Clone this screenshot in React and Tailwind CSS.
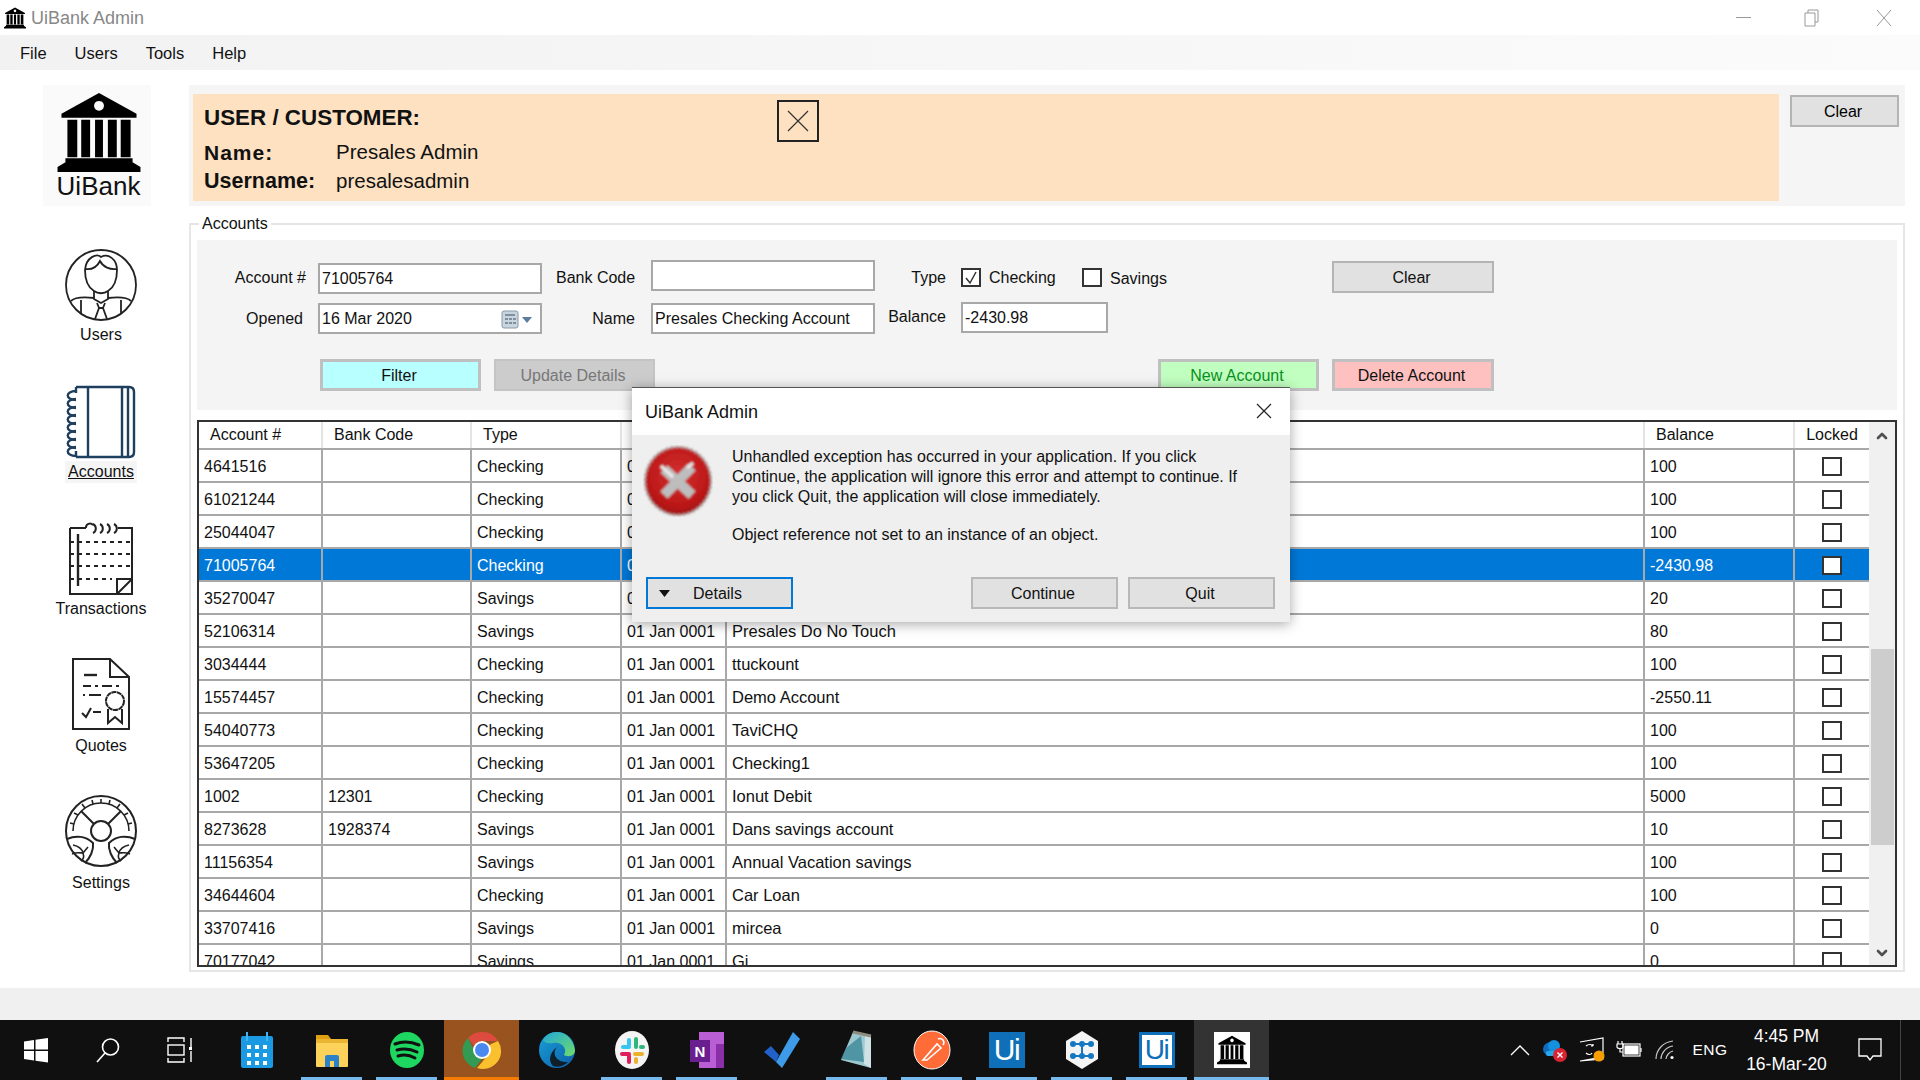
import { ChevronUp, ChevronDown } from "lucide-react";

const rows = [
  ["4641516", "", "Checking", "", "100"],
  ["61021244", "", "Checking", "", "100"],
  ["25044047", "", "Checking", "", "100"],
  ["71005764", "", "Checking", "", "-2430.98", true],
  ["35270047", "", "Savings", "", "20"],
  ["52106314", "", "Savings", "Presales Do No Touch", "80"],
  ["3034444", "", "Checking", "ttuckount", "100"],
  ["15574457", "", "Checking", "Demo Account", "-2550.11"],
  ["54040773", "", "Checking", "TaviCHQ", "100"],
  ["53647205", "", "Checking", "Checking1", "100"],
  ["1002", "12301", "Checking", "Ionut Debit", "5000"],
  ["8273628", "1928374", "Savings", "Dans savings account", "10"],
  ["11156354", "", "Savings", "Annual Vacation savings", "100"],
  ["34644604", "", "Checking", "Car Loan", "100"],
  ["33707416", "", "Savings", "mircea", "0"],
  ["70177042", "", "Savings", "Gi", "0"],
];

function BankGlyph({ className }) {
  return (
    <svg viewBox="0 0 84 80" className={className}>
      <path fillRule="evenodd" d="M42 0 L80 21 V25 H4 V21 Z M42 8 a5 5 0 1 0 .01 0 Z" />
      <path d="M10 27h10v38H10zM24 27h9v38h-9zM38 27h8v38h-8zM51 27h9v38h-9zM64 27h10v38H64z" />
      <path d="M8 66 H76 V70 L84 75 V80 H0 V75 L8 70 Z" />
    </svg>
  );
}

function UsersIcon() {
  return (
    <svg width="74" height="74" viewBox="0 0 74 74" fill="none" stroke="#222" strokeWidth="1.8">
      <circle cx="37" cy="37" r="35" />
      <path d="M21 22 C22 9 33 5 37 9 C44 5 53 11 53 22 C53 33 49 40 44 43 C40 46 34 46 30 43 C25 40 21 33 21 22 Z" />
      <path d="M21 21 C28 22 33 19 36 13 C39 19 46 22 53 21" />
      <path d="M30 43 V51 L37 55 L44 51 V43" />
      <path d="M7 53 C11 49 21 49 30 50 M67 53 C63 49 53 49 44 50" />
      <path d="M33 55 L35 60 L31 71 M41 55 L39 60 L43 71 M35 60 H39 M17 52 V66 M57 52 V66" />
    </svg>
  );
}

function AccountsIcon() {
  return (
    <svg width="72" height="74" viewBox="0 0 72 74" fill="none" stroke="#1f3f5f" strokeWidth="2.4">
      <path d="M11 2 H64 Q69 2 69 7 V67 Q69 72 64 72 H11" />
      <path d="M11 2 V8 M11 66 V72 M23 2 V72 M57 2 V72 M63 2 V72" />
      {[6, 14, 22, 30, 38, 46, 54, 62].map((y) => (
        <path key={y} d="M11 0 C0 0 0 9 11 9" transform={`translate(0 ${y})`} />
      ))}
    </svg>
  );
}

function TransactionsIcon() {
  return (
    <svg width="66" height="74" viewBox="0 0 66 74" fill="none" stroke="#222" strokeWidth="2">
      <path d="M2 6 H18 M50 6 H64 V72 H2 V6" />
      <path d="M18 6 a4 4 0 0 1 7 -3 M25 2 a5 5 0 0 1 0 9 M32 2 a5 5 0 0 1 0 9 M39 2 a5 5 0 0 1 0 9 M46 2 a5 5 0 0 1 0 9" />
      <path d="M10 12 V64" strokeWidth="2.4" />
      <path d="M2 20 H64 M2 32 H64 M2 44 H64" strokeDasharray="4 4" />
      <path d="M2 57 H44" strokeDasharray="4 4" />
      <path d="M49 72 V57 H64 M49 72 L64 57" />
    </svg>
  );
}

function QuotesIcon() {
  return (
    <svg width="60" height="74" viewBox="0 0 60 74" fill="none" stroke="#222" strokeWidth="2" className="mb-[4px]">
      <path d="M2 2 H39 L58 20 V72 H2 Z" />
      <path d="M39 2 V20 H58" />
      <path d="M13 18 H26" strokeWidth="2.4" />
      <path d="M12 29 H20 M24 29 H27 M31 29 H41 M45 29 H48" />
      <path d="M12 38 H14 M18 38 H30" />
      <path d="M11 56 L15 60 L20 51 M22 55 H30" />
      <circle cx="44" cy="44" r="9" strokeDasharray="5 0.5" />
      <path d="M37 52 V66 L44 60 L51 66 V52" />
    </svg>
  );
}

function SettingsIcon() {
  return (
    <svg width="74" height="74" viewBox="0 0 74 74" fill="none" stroke="#222" strokeWidth="2" className="mb-[4px]">
      <circle cx="37" cy="37" r="35" />
      <circle cx="37" cy="37" r="10" />
      <path d="M30 30 L17 17 M44 30 L57 17" />
      <path d="M9 37 A28 28 0 0 1 65 37" strokeWidth="1.6" />
      <path d="M37 9 V5 M29 10 L28 6 M45 10 L46 6 M21 14 L18 10 M53 14 L56 10 M14 21 L10 19 M60 21 L64 19 M10 30 L6 29 M64 30 L68 29" strokeWidth="1.6" />
      <path d="M3 45 C12 41 22 42 29 49 C30 56 26 64 21 69 M71 45 C62 41 52 42 45 49 C44 56 48 64 53 69" />
      <path d="M9 51 C14 52 18 55 19 59 M8 60 C12 58 16 59 19 59 M19 59 C20 62 20 65 17 67 M24 53 L19 59" strokeWidth="1.6" />
      <path d="M65 51 C60 52 56 55 55 59 M66 60 C62 58 58 59 55 59 M55 59 C54 62 54 65 57 67 M50 53 L55 59" strokeWidth="1.6" />
    </svg>
  );
}

function NavItem({ icon, label, active }) {
  return (
    <div className="h-[137px] flex flex-col items-center">
      <div className="h-[76px] flex items-center justify-center">{icon}</div>
      <div className={`mt-[1px] px-[3px] py-[1px] text-[16px] leading-[20px] text-[#111] ${active ? "bg-[#f5f5f5] underline" : ""}`}>
        {label}
      </div>
    </div>
  );
}

function Field({ w, h = "h-[31px]", extra = "", children }) {
  return (
    <div className={`${w} ${h} ${extra} shrink-0 bg-white border-2 border-[#a8a8a8] flex items-center pl-[2px] text-[16px] text-[#111]`}>
      {children}
    </div>
  );
}

function Btn({ className, children }) {
  return (
    <div className={`h-[32px] flex items-center justify-center pt-[1px] pr-[3px] text-[16px] shrink-0 ${className}`}>
      {children}
    </div>
  );
}

function Check({ checked }) {
  return (
    <div className="w-[20px] h-[19px] border-2 border-[#333] flex items-center justify-center bg-white">
      {checked && (
        <svg width="14" height="14" viewBox="0 0 14 14" fill="none" stroke="#333" strokeWidth="1.5">
          <path d="M2 7 L6 12 L12 1" />
        </svg>
      )}
    </div>
  );
}

function TableRow({ r }) {
  const [account, bank, type, name, balance, selected] = r;
  const cell = "h-full flex items-center pl-[5px] pt-[2px] border-r-2 border-[#a8a8a8] shrink-0 whitespace-nowrap";
  return (
    <div className={`flex h-[33px] shrink-0 border-b-2 border-[#a8a8a8] text-[16px] ${selected ? "bg-[#0078d7] text-white" : "bg-white text-[#111]"}`}>
      <div className={`${cell} w-[124px]`}>{account}</div>
      <div className={`${cell} w-[149px]`}>{bank}</div>
      <div className={`${cell} w-[150px]`}>{type}</div>
      <div className={`${cell} w-[105px]`}>01 Jan 0001</div>
      <div className={`${cell} w-[918px] text-[16.5px]`}>{name}</div>
      <div className={`${cell} w-[150px]`}>{balance}</div>
      <div className="w-[74px] h-full pt-[2px] flex items-center justify-center">
        <Check />
      </div>
    </div>
  );
}

function HeaderCell({ w, children }) {
  return (
    <div className={`${w} pl-[11px] h-full flex items-center border-r-2 border-[#e4e4e4] shrink-0`}>{children}</div>
  );
}

function Grid() {
  return (
    <div className="mt-[10px] h-[547px] border-2 border-[#333] flex overflow-hidden">
      <div className="w-[1670px] flex flex-col overflow-hidden">
        <div className="flex h-[28px] shrink-0 border-b-2 border-[#a8a8a8] bg-white text-[16px] text-[#111]">
          <HeaderCell w="w-[124px]">Account #</HeaderCell>
          <HeaderCell w="w-[149px]">Bank Code</HeaderCell>
          <HeaderCell w="w-[150px]">Type</HeaderCell>
          <HeaderCell w="w-[105px]">Opened</HeaderCell>
          <HeaderCell w="w-[918px]">Name</HeaderCell>
          <HeaderCell w="w-[150px]">Balance</HeaderCell>
          <div className="w-[74px] h-full flex items-center justify-center">Locked</div>
        </div>
        {rows.map((r) => (
          <TableRow key={r[0]} r={r} />
        ))}
      </div>
      <div className="w-[26px] bg-[#f0f0f0] flex flex-col items-center">
        <div className="h-[27px] flex items-center justify-center shrink-0 text-[#505050]">
          <ChevronUp size={16} strokeWidth={4} />
        </div>
        <div className="h-[200px] shrink-0" />
        <div className="h-[196px] w-[23px] bg-[#cdcdcd] shrink-0" />
        <div className="flex-1" />
        <div className="h-[24px] flex items-center justify-center shrink-0 text-[#505050]">
          <ChevronDown size={16} strokeWidth={4} />
        </div>
      </div>
    </div>
  );
}

function AccountsForm() {
  return (
    <div className="h-[170px] bg-[#f4f4f4] text-[16px] text-[#111]">
      <div className="flex h-[33px] pt-[20px] box-content items-start">
        <div className="w-[109px] text-right mt-[6px] whitespace-nowrap">Account #</div>
        <Field w="w-[224px] ml-[12px]" extra="mt-[3px]">71005764</Field>
        <div className="w-[77px] ml-[14px] text-right mt-[6px] whitespace-nowrap">Bank Code</div>
        <Field w="w-[224px] ml-[18px]" />
        <div className="w-[71px] text-right mt-[6px]">Type</div>
        <div className="ml-[15px] mt-[8px]"><Check checked /></div>
        <div className="ml-[8px] w-[93px] mt-[6px]">Checking</div>
        <div className="mt-[8px]"><Check /></div>
        <div className="ml-[8px] mt-[7px] w-[222px]">Savings</div>
        <Btn className="w-[162px] mt-[1px] bg-[#e1e1e1] border-2 border-[#b4b4b4]">Clear</Btn>
      </div>
      <div className="flex h-[33px] mt-[9px] items-start">
        <div className="w-[106px] text-right mt-[5px]">Opened</div>
        <Field w="w-[224px] ml-[15px]" extra="mt-[1px]">
          16 Mar 2020
          <svg className="ml-auto mr-[5px]" width="34" height="20" viewBox="0 0 34 20">
            <rect x="1" y="2" width="16" height="17" rx="2" fill="#c8d4de" stroke="#8a9aa8" />
            <path d="M4 5h10v2H4zM4 9h3v2H4zM8 9h3v2H8zM12 9h3v2h-3zM4 13h3v2H4zM8 13h3v2H8zM12 13h3v2h-3z" fill="#7f8f9f" />
            <path d="M21 8h10l-5 6z" fill="#5a7da0" />
          </svg>
        </Field>
        <div className="w-[78px] ml-[15px] text-right mt-[5px]">Name</div>
        <Field w="w-[224px] ml-[16px]" extra="mt-[1px]">Presales Checking Account</Field>
        <div className="w-[71px] text-right mt-[3px]">Balance</div>
        <Field w="w-[147px] ml-[15px]">-2430.98</Field>
      </div>
      <div className="flex mt-[24px] ml-[123px]">
        <Btn className="w-[161px] bg-[#b8ffff] border-[3px] border-[#c0c0c0]">Filter</Btn>
        <Btn className="w-[161px] ml-[13px] bg-[#cccccc] border-2 border-[#c4c4c4] text-[#777]">Update Details</Btn>
        <Btn className="w-[161px] ml-[503px] bg-[#c0ffc0] border-[3px] border-[#c0c0c0] text-[#0a8f20]">New Account</Btn>
        <Btn className="w-[162px] ml-[13px] bg-[#ffc0c0] border-[3px] border-[#c0c0c0]">Delete Account</Btn>
      </div>
    </div>
  );
}

function ErrorIcon() {
  return (
    <svg width="70" height="72" viewBox="0 0 70 72">
      <defs>
        <radialGradient id="errRed" cx="0.5" cy="0.4" r="0.7">
          <stop offset="0" stopColor="#d23030" />
          <stop offset="0.65" stopColor="#bd1818" />
          <stop offset="1" stopColor="#8c0f0f" />
        </radialGradient>
        <filter id="errSoft" x="-10%" y="-10%" width="120%" height="120%">
          <feGaussianBlur stdDeviation="0.8" />
        </filter>
      </defs>
      <g filter="url(#errSoft)">
        <ellipse cx="35" cy="36" rx="33" ry="34" fill="url(#errRed)" stroke="#a89a9a" strokeWidth="2.5" strokeDasharray="3 2" />
        <path d="M21 24 L49 50 M49 22 L21 50" stroke="#bdbdbd" strokeWidth="10" />
        <path d="M18 21 L30 32 M44 23 L50 18" stroke="#e8e8e8" strokeWidth="3.5" />
      </g>
    </svg>
  );
}

function ErrorDialog() {
  return (
    <div className="absolute left-[632px] top-[387px] w-[658px] h-[235px] flex flex-col bg-[#efefef] border-t border-[#555] shadow-[0_2px_12px_rgba(0,0,0,0.35)] text-[16px] text-[#111]">
      <div className="h-[47px] bg-white flex items-center pl-[13px] text-[18px] shrink-0">
        <span className="mt-[1px]">UiBank Admin</span>
        <svg className="ml-auto mr-[18px] mb-[1px]" width="16" height="16" viewBox="0 0 16 16" stroke="#222" strokeWidth="1.2">
          <path d="M1 1 L15 15 M15 1 L1 15" />
        </svg>
      </div>
      <div className="flex pl-[11px] pt-[10px] flex-1">
        <ErrorIcon />
        <div className="ml-[19px] mt-[2px] w-[540px] leading-[20px]">
          <div>Unhandled exception has occurred in your application. If you click</div>
          <div className="tracking-[-0.05px]">Continue, the application will ignore this error and attempt to continue. If</div>
          <div>you click Quit, the application will close immediately.</div>
          <div className="mt-[18px]">Object reference not set to an instance of an object.</div>
        </div>
      </div>
      <div className="flex pl-[14px] pb-[13px]">
        <div className="w-[147px] h-[32px] pt-[1px] border-2 border-[#0078d7] bg-[#e1e1e1] flex items-center">
          <svg className="ml-[11px]" width="11" height="7" viewBox="0 0 11 7"><path d="M0 0h11L5.5 7z" fill="#111" /></svg>
          <span className="ml-[23px]">Details</span>
        </div>
        <div className="w-[147px] h-[32px] pt-[1px] pr-[3px] ml-[178px] border-2 border-[#b8b8b8] bg-[#e1e1e1] flex items-center justify-center">Continue</div>
        <div className="w-[147px] h-[32px] pt-[1px] pr-[3px] ml-[10px] border-2 border-[#b8b8b8] bg-[#e1e1e1] flex items-center justify-center">Quit</div>
      </div>
    </div>
  );
}

const I = (p) => <svg width="40" height="40" viewBox="0 0 40 40" {...p} />;

const taskIcons = [
  {
    key: "calendar",
    el: (
      <I>
        <rect x="4" y="6" width="32" height="32" rx="2" fill="#1b9ae4" />
        <path d="M9 2h2v9H9zM29 2h2v9h-2z" fill="#3fb4f0" />
        <path d="M10 15h4v4h-4zM18 15h4v4h-4zM26 15h4v4h-4zM10 23h4v4h-4zM18 23h4v4h-4zM26 23h4v4h-4zM10 31h4v4h-4zM18 31h4v4h-4zM26 31h4v4h-4z" fill="#fff" />
      </I>
    ),
  },
  {
    key: "folder",
    line: true,
    el: (
      <I>
        <path d="M4 5h12l3 4h-15z" fill="#e0a010" />
        <rect x="4" y="9" width="32" height="28" rx="1" fill="#fcd25a" />
        <rect x="4" y="9" width="32" height="4" fill="#eab530" />
        <path d="M13 37V27a2 2 0 0 1 2-2h10a2 2 0 0 1 2 2v10h-5v-6h-4v6z" fill="#2b82c9" />
      </I>
    ),
  },
  {
    key: "spotify",
    line: true,
    el: (
      <I>
        <ellipse cx="20" cy="20" rx="17" ry="18" fill="#1ed760" />
        <path d="M8 14 C16 11 25 12 32 15 M10 20 C17 18 24 19 30 22 M11 26 C17 24 23 25 28 28" stroke="#111" strokeWidth="3" fill="none" strokeLinecap="round" />
      </I>
    ),
  },
  {
    key: "chrome",
    el: (
      <I>
        <path d="M20 2 A18 18 0 0 1 36 11 H20 A9 9 0 0 0 12 16 L6 8 A18 18 0 0 1 20 2 Z" fill="#dd4b3e" />
        <path d="M6 8 L14 24 A9 9 0 0 0 20 29 L13 38 A18 18 0 0 1 6 8 Z" fill="#329a53" />
        <path d="M36 11 A18 18 0 0 1 15 38 L27 24 A9 9 0 0 0 27 15 Z" fill="#fbc02d" />
        <circle cx="20" cy="20" r="9" fill="#fff" />
        <circle cx="20" cy="20" r="7" fill="#4a8af0" />
      </I>
    ),
  },
  {
    key: "edge",
    el: (
      <I>
        <defs>
          <linearGradient id="edgeG" x1="0" y1="0" x2="1" y2="1">
            <stop offset="0" stopColor="#19a0d8" />
            <stop offset="1" stopColor="#0c5ea8" />
          </linearGradient>
          <linearGradient id="edgeT" x1="0" y1="0" x2="1" y2="1">
            <stop offset="0" stopColor="#22a8d8" />
            <stop offset="1" stopColor="#6fdc6a" />
          </linearGradient>
        </defs>
        <circle cx="20" cy="20" r="18" fill="url(#edgeG)" />
        <path d="M6 10 C12 -2 34 -2 38 20 C38 27 30 27 27 25 C31 18 24 11 16 13 C10 14 7 12 6 10 Z" fill="url(#edgeT)" />
        <path d="M22 16 C14 20 17 33 31 32 C27 36 20 38 16 36 C10 30 14 20 22 16 Z" fill="#0f0f0f" opacity="0.85" />
      </I>
    ),
  },
  {
    key: "slack",
    line: true,
    el: (
      <I>
        <ellipse cx="20" cy="20" rx="17" ry="19" fill="#f4f4f4" />
        <rect x="9" y="15" width="10" height="4" rx="2" fill="#36c5f0" />
        <rect x="15" y="8" width="4" height="9" rx="2" fill="#36c5f0" />
        <rect x="22" y="7" width="4" height="12" rx="2" fill="#2eb67d" />
        <rect x="27" y="15" width="6" height="4" rx="2" fill="#2eb67d" />
        <rect x="21" y="22" width="11" height="4" rx="2" fill="#ecb22e" />
        <rect x="22" y="27" width="4" height="7" rx="2" fill="#ecb22e" />
        <rect x="8" y="22" width="11" height="4" rx="2" fill="#e01e5a" />
        <rect x="15" y="24" width="4" height="10" rx="2" fill="#e01e5a" />
      </I>
    ),
  },
  {
    key: "onenote",
    line: true,
    el: (
      <I>
        <rect x="12" y="2" width="25" height="36" fill="#ba5ed6" />
        <rect x="29" y="14" width="8" height="24" fill="#8a2fa8" />
        <rect x="3" y="10" width="20" height="22" fill="#6a1f90" />
        <text x="13" y="27" textAnchor="middle" fontSize="15" fontWeight="700" fill="#fff" fontFamily="Liberation Sans">N</text>
      </I>
    ),
  },
  {
    key: "todo",
    el: (
      <I>
        <path d="M2 22 L9 16 L17 25 L14 32 Z" fill="#2261c8" />
        <path d="M14 32 L31 2 L38 9 L20 38 Z" fill="#3d9be9" />
      </I>
    ),
  },
  {
    key: "notepad",
    line: true,
    el: (
      <I>
        <path d="M16 2 L34 6 L34 38 L4 30 Z" fill="#9ec8cf" />
        <path d="M28 6 L34 6 L34 38 L27 34 Z" fill="#cfe3e6" />
        <path d="M16 2 L34 6" stroke="#8d8d7d" strokeWidth="3" />
        <path d="M9 18 L24 6 L27 32 L4 29 Z" fill="#2f7f92" opacity="0.7" />
      </I>
    ),
  },
  {
    key: "postman",
    line: true,
    el: (
      <I>
        <ellipse cx="20" cy="20" rx="18" ry="19" fill="#ff6c37" stroke="#fff" strokeWidth="1" />
        <path d="M11 30 L25 14 L29 18 L15 30 Z M26 9 a4 4 0 0 1 5 6" fill="none" stroke="#fff" strokeWidth="1.6" />
      </I>
    ),
  },
  {
    key: "ui1",
    line: true,
    el: (
      <div className="w-[36px] h-[36px] bg-[#0f6fb8] flex items-center justify-center text-white text-[30px] leading-none tracking-tighter">Ui</div>
    ),
  },
  {
    key: "orchestrator",
    line: true,
    el: (
      <I>
        <path d="M20 1 L36 11 V29 L20 39 L4 29 V11 Z" fill="#f4f4f4" />
        <path d="M11 14h18M20 14v12M11 26h18" stroke="#1577c2" strokeWidth="2" />
        <circle cx="11" cy="14" r="3" fill="#1577c2" /><circle cx="20" cy="14" r="3" fill="#1577c2" /><circle cx="29" cy="14" r="3" fill="#1577c2" />
        <circle cx="11" cy="26" r="3" fill="#1577c2" /><circle cx="20" cy="26" r="3" fill="#1577c2" /><circle cx="29" cy="26" r="3" fill="#1577c2" />
      </I>
    ),
  },
  {
    key: "ui2",
    line: true,
    el: (
      <div className="w-[36px] h-[36px] bg-white border-[3px] border-[#0f6fb8] flex items-center justify-center text-[#0f6fb8] text-[28px] leading-none tracking-tighter">Ui</div>
    ),
  },
  {
    key: "bank",
    active: true,
    el: (
      <div className="w-[36px] h-[36px] bg-white flex items-center justify-center">
        <BankGlyph className="w-[30px] h-[30px]" />
      </div>
    ),
  },
];

function TaskCell({ t }) {
  const bg = t.key === "chrome" ? "bg-[#98531f]" : t.active ? "bg-[#333333]" : "";
  return (
    <div className={`w-[75px] h-full flex flex-col items-center shrink-0 ${bg}`}>
      <div className="flex-1 flex items-center justify-center pt-[3px]">{t.el}</div>
      {t.key === "chrome" && <div className="h-[3px] w-full bg-[#f57c00]" />}
      {t.active && <div className="h-[3px] w-full bg-[#76b9ed]" />}
      {t.line && <div className="h-[3px] w-[61px] bg-[#76b9ed]" />}
      {!t.line && !t.active && t.key !== "chrome" && <div className="h-[3px]" />}
    </div>
  );
}

function Taskbar() {
  return (
    <div className="h-[60px] bg-[#101010] flex items-center text-white shrink-0">
      <div className="w-[71px] h-full flex items-center justify-center">
        <svg width="26" height="26" viewBox="0 0 26 26" fill="#fff">
          <path d="M1 4.5 L11 3 V12.5 H1 Z M12.5 2.8 L25 1 V12.5 H12.5 Z M1 14 H11 V23.5 L1 22 Z M12.5 14 H25 V25.5 L12.5 23.7 Z" />
        </svg>
      </div>
      <div className="w-[74px] h-full flex items-center justify-center">
        <svg width="26" height="26" viewBox="0 0 26 26" fill="none" stroke="#fff" strokeWidth="1.6">
          <circle cx="15.5" cy="10" r="8" />
          <path d="M10 16 L2 25" />
        </svg>
      </div>
      <div className="w-[69px] h-full flex items-center justify-center">
        <svg width="26" height="26" viewBox="0 0 26 26" fill="none" stroke="#fff" strokeWidth="1.4">
          <path d="M1 5 V1 H17 V5 M1 21 V25 H17 V21" />
          <rect x="1" y="8" width="16" height="10" />
          <path d="M24 1 V10 M24 14 V25" />
          <path d="M22 11.5 h3" strokeWidth="3" />
        </svg>
      </div>
      <div className="w-[5px]" />
      <div className="flex h-full">
        {taskIcons.map((t) => (
          <TaskCell key={t.key} t={t} />
        ))}
      </div>
      <div className="ml-auto flex h-full items-center shrink-0">
        <div className="w-[36px] flex justify-center">
          <svg width="20" height="12" viewBox="0 0 20 12" fill="none" stroke="#fff" strokeWidth="1.3"><path d="M1 11 L10 2 L19 11" /></svg>
        </div>
        <div className="w-[34px] flex justify-center">
          <svg width="26" height="24" viewBox="0 0 26 24">
            <ellipse cx="9" cy="11" rx="8" ry="7" fill="#0f6cbd" />
            <ellipse cx="12" cy="8" rx="6" ry="6" fill="#1490df" />
            <rect x="4" y="13" width="14" height="5" rx="2" fill="#28a8ea" />
            <circle cx="18" cy="17" r="7" fill="#d92332" />
            <path d="M15.5 14.5 L20.5 19.5 M20.5 14.5 L15.5 19.5" stroke="#fff" strokeWidth="1.4" />
          </svg>
        </div>
        <div className="w-[40px] flex justify-center">
          <svg width="26" height="26" viewBox="0 0 26 26" fill="none" stroke="#fff" strokeWidth="1.2">
            <path d="M1 5 L24 1 V16 M24 20 V22 L1 24 Z" />
            <path d="M7 9 C9 7 13 7 14 9 M14 9 V7 M14 9 H12 M7 16 C9 18 12 18 13 16" />
            <circle cx="20" cy="19" r="5.5" fill="#f6a000" stroke="none" />
          </svg>
        </div>
        <div className="w-[33px] flex justify-center">
          <svg width="26" height="20" viewBox="0 0 26 20" fill="none" stroke="#fff" strokeWidth="1.2">
            <path d="M2 1 V4 M6 1 V4 M1 4 H7 V7 C7 9 1 9 1 7 Z M4 9 V12 H7" />
            <rect x="7" y="4" width="17" height="12" />
            <rect x="9" y="6" width="13" height="8" fill="#fff" />
            <path d="M25 8 V12" />
          </svg>
        </div>
        <div className="w-[40px] flex justify-center">
          <svg width="20" height="20" viewBox="0 0 20 20" fill="none" stroke="#c8c8c8" strokeWidth="1.2">
            <path d="M1 19 C1 10 8 2 18 1 M6 19 C6 13 11 7 18 6 M11 19 C11 16 14 12 18 11" />
            <circle cx="17" cy="17.5" r="1.6" fill="#fff" stroke="none" />
          </svg>
        </div>
        <div className="w-[50px] text-center text-[15.5px] tracking-[0.5px]">ENG</div>
        <div className="w-[105px] pr-[2px] text-center text-[17.5px] leading-[28px]">
          <div>4:45 PM</div>
          <div>16-Mar-20</div>
        </div>
        <div className="w-[60px] flex justify-center">
          <svg width="24" height="24" viewBox="0 0 24 24" fill="none" stroke="#fff" strokeWidth="1.3">
            <path d="M1 1 H23 V18 H15 L12 22 L9 18 H1 Z" />
          </svg>
        </div>
        <div className="w-[20px] h-full border-l border-[#444]" />
      </div>
    </div>
  );
}

export default function App() {
  return (
    <div className="relative w-[1920px] h-[1080px] flex flex-col overflow-hidden bg-white font-['Liberation_Sans',Arial,sans-serif]">
      {/* Title bar */}
      <div className="h-[35px] flex items-center shrink-0">
        <BankGlyph className="ml-[4px] w-[22px] h-[22px]" />
        <div className="ml-[5px] mt-[2px] text-[18px] text-[#888]">UiBank Admin</div>
        <div className="ml-auto flex">
          <div className="w-[72px] pl-[6px] flex justify-center">
            <div className="mt-[1px] w-[15px] h-[16px] flex items-center"><div className="w-full h-px bg-[#999]" /></div>
          </div>
          <div className="w-[72px] flex justify-center">
            <svg width="16" height="18" viewBox="0 0 16 18" fill="none" stroke="#999"><path d="M4 4 V1 H14 V13 H11 M1 4 H11 V17 H1 Z" /></svg>
          </div>
          <div className="w-[72px] flex justify-center">
            <svg width="16" height="18" viewBox="0 0 16 18" stroke="#999"><path d="M1 1 L15 17 M15 1 L1 17" /></svg>
          </div>
        </div>
      </div>

      {/* Menu */}
      <div className="h-[35px] pl-[20px] pt-[1px] flex items-center gap-[28px] text-[16.5px] text-[#111] bg-linear-to-r from-[#f2f2f2] to-[#fbfbfb] shrink-0">
        <span>File</span>
        <span>Users</span>
        <span>Tools</span>
        <span>Help</span>
      </div>

      {/* Main */}
      <div className="flex-1 flex min-h-0">
        <div className="w-[189px] shrink-0">
          <div className="ml-[43px] mt-[15px] w-[108px] h-[121px] bg-[#fafafa] flex flex-col items-center pl-[3px]">
            <BankGlyph className="w-[84px] h-[79px] mt-[8px]" />
            <div className="text-[26px] leading-[28px] text-[#111]">UiBank</div>
          </div>
          <div className="pl-[13px] mt-[41px]">
            <NavItem icon={<UsersIcon />} label="Users" />
            <NavItem icon={<AccountsIcon />} label="Accounts" active />
            <NavItem icon={<TransactionsIcon />} label="Transactions" />
            <NavItem icon={<QuotesIcon />} label="Quotes" />
            <NavItem icon={<SettingsIcon />} label="Settings" />
          </div>
        </div>

        <div className="w-[1716px] shrink-0">
          {/* Customer header */}
          <div className="mt-[15px] h-[121px] bg-[#f5f5f5] pl-[4px] pt-[9px] flex">
            <div className="w-[1586px] h-[107px] bg-[#fde1c1] flex text-[#111]">
              <div className="w-[584px] pl-[11px]">
                <div className="mt-[10px] text-[22.4px] leading-[28px] font-bold">USER / CUSTOMER:</div>
                <div className="mt-[6px] flex h-[29px] items-center">
                  <div className="w-[132px] text-[21px] font-bold tracking-[1px]">Name:</div>
                  <div className="text-[20.5px]">Presales Admin</div>
                </div>
                <div className="flex h-[28px] items-center">
                  <div className="w-[132px] text-[21.5px] font-bold">Username:</div>
                  <div className="text-[20.5px]">presalesadmin</div>
                </div>
              </div>
              <div className="mt-[6px] w-[42px] h-[42px] border-2 border-[#222] flex items-center justify-center">
                <svg width="22" height="22" viewBox="0 0 22 22" stroke="#333" strokeWidth="1.2"><path d="M1 1 L21 21 M21 1 L1 21" /></svg>
              </div>
            </div>
            <Btn className="ml-[11px] w-[109px] mt-[1px] bg-[#e1e1e1] border-2 border-[#b4b4b4]">Clear</Btn>
          </div>

          {/* Accounts group */}
          <fieldset className="mt-[8px] h-[758px] border-2 border-[#e6e6e6] px-[6px] pb-[4px]">
            <legend className="ml-[2px] mt-[1px] px-[3px] text-[16px] leading-[20px] text-[#111]">Accounts</legend>
            <div className="mt-[6px]">
              <AccountsForm />
              <Grid />
            </div>
          </fieldset>
        </div>
      </div>

      {/* Status strip */}
      <div className="h-[32px] bg-[#f0f0f0] shrink-0" />
      <Taskbar />
      <ErrorDialog />
    </div>
  );
}
